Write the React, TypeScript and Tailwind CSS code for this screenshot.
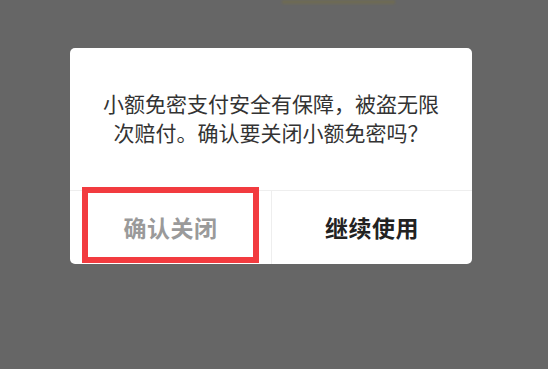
import React from "react";

export default function App() {
  return (
    <div
      className="w-[548px] h-[369px] bg-[#666666] flex flex-col overflow-hidden"
      style={{ fontFamily: '"Noto Sans CJK SC", "Noto Sans", sans-serif' }}
    >
      <div className="ml-[282px] w-[113px] h-[4px] bg-[#6e6b55] blur-[1px]" />
      <div className="ml-[70px] mt-[44px] w-[402px] h-[216px] bg-white rounded-[5px] flex flex-col">
        <div className="h-[142px] flex items-center justify-center px-[28px] pb-[3px]">
          <p className="text-[21px] leading-[29px] text-[#333333] text-center">
            小额免密支付安全有保障，被盗无限
            <br />
            次赔付。确认要关闭小额免密吗？
          </p>
        </div>
        <div className="h-[74px] border-t border-[#eeeeee] flex">
          <div className="relative w-[201px] flex items-center justify-center">
            <span className="text-[23px] font-bold text-[#9a9a9a] tracking-[0.5px]">确认关闭</span>
            <div className="absolute left-[12px] top-[-4px] w-[177px] h-[76px] border-[6px] border-[#f23b3f]" />
          </div>
          <div className="w-px bg-[#eeeeee]" />
          <div className="flex-1 flex items-center justify-center">
            <span className="text-[23px] font-bold text-[#222222] tracking-[0.5px]">继续使用</span>
          </div>
        </div>
      </div>
    </div>
  );
}
